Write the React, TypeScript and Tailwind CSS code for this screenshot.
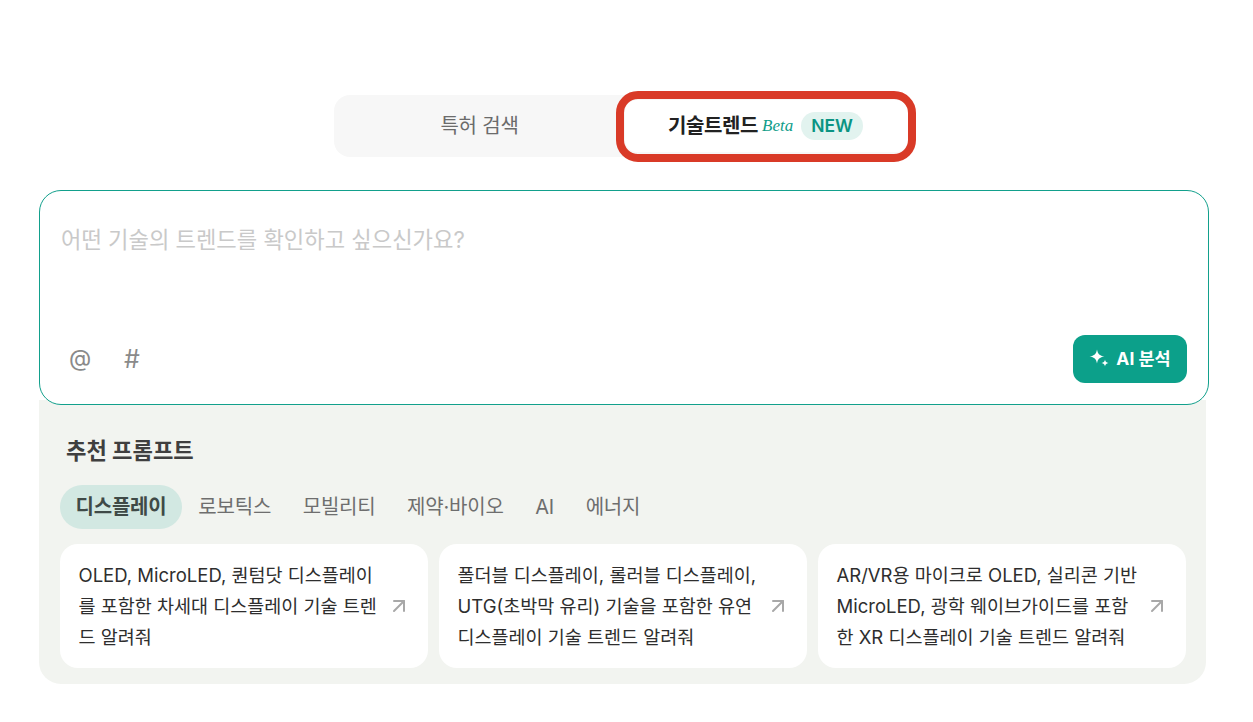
import { ArrowUpRight } from "lucide-react"

const categories = ["디스플레이", "로보틱스", "모빌리티", "제약·바이오", "AI", "에너지"]

const prompts = [
  ["OLED, MicroLED, 퀀텀닷 디스플레이", "를 포함한 차세대 디스플레이 기술 트렌", "드 알려줘"],
  ["폴더블 디스플레이, 롤러블 디스플레이,", "UTG(초박막 유리) 기술을 포함한 유연", "디스플레이 기술 트렌드 알려줘"],
  ["AR/VR용 마이크로 OLED, 실리콘 기반", "MicroLED, 광학 웨이브가이드를 포함", "한 XR 디스플레이 기술 트렌드 알려줘"],
]

function Sparkle() {
  return (
    <svg width="20" height="20" viewBox="0 0 20 20" fill="white">
      <path d="M8 0.5 C8.8 5 10.5 6.7 15.5 7.5 C10.5 8.3 8.8 10 8 14.5 C7.2 10 5.5 8.3 0.5 7.5 C5.5 6.7 7.2 5 8 0.5 Z" />
      <path d="M16 10.5 C16.3 12.6 17 13.3 19.5 14 C17 14.7 16.3 15.4 16 17.5 C15.7 15.4 15 14.7 12.5 14 C15 13.3 15.7 12.6 16 10.5 Z" />
    </svg>
  )
}

export default function App() {
  return (
    <div className="min-h-[722px] bg-white pt-[95px] font-['Inter','Noto_Sans_CJK_KR',sans-serif]">
      {/* Tabs */}
      <div className="ml-[334px] flex h-[62px] w-[578px] rounded-2xl bg-[#f7f7f7] py-[5px]">
        <button className="w-[291px] text-[20px] tracking-[-0.2px] text-[#6b6b6b]">특허 검색</button>
        <div className="relative flex w-[283px] items-center justify-center rounded-xl bg-white pr-[2px]">
          <span className="text-[20px] font-bold tracking-[-0.4px] text-[#222222]">기술트렌드</span>
          <span className="ml-[4px] font-['Liberation_Serif',serif] text-[17px] italic text-[#0f9d8a]">Beta</span>
          <span className="ml-[8px] flex h-[28px] items-center rounded-full bg-[#e2f3ef] px-[10px] text-[17.5px] font-semibold text-[#0b9483]">
            NEW
          </span>
          {/* annotation */}
          <div className="absolute top-[-9px] left-[-9px] h-[71px] w-[300px] rounded-[22px] border-[8px] border-[#d93a27]" />
        </div>
      </div>

      <div className="mt-[33px] ml-[39px] w-[1170px]">
        {/* Prompt box */}
        <div className="relative z-10 flex h-[215px] flex-col justify-between rounded-[22px] border border-[#12a08c] bg-white pt-[34px] pr-[21px] pb-[21px] pl-[21px]">
          <p className="text-[22.2px] leading-[30px] text-[#c9c9c9]">어떤 기술의 트렌드를 확인하고 싶으신가요?</p>
          <div className="flex items-center justify-between">
            <div className="flex items-center pl-[8px] text-[#8a8a8a]">
              <span className="mb-[2px] w-[55px] text-[23px]">@</span>
              <span className="mt-[2px] text-[25px]">#</span>
            </div>
            <button className="flex h-[48px] w-[114px] items-center justify-center gap-[7px] rounded-xl bg-[#0ca08a] text-[17.5px] font-bold text-white">
              <Sparkle />
              AI 분석
            </button>
          </div>
        </div>

        {/* Recommended prompts */}
        <div className="mt-[-5px] h-[284px] w-[1167px] rounded-b-[22px] bg-[#f2f4f0] pt-[35px] pl-[21px]">
          <h2 className="pl-[6px] text-[22.2px] leading-[32px] font-bold text-[#3f3f3f]">추천 프롬프트</h2>
          <div className="mt-[18px] flex h-[44px] items-center gap-[1px] tracking-[-0.2px]">
            {categories.map((c, i) => (
              <button
                key={c}
                className={
                  i === 0
                    ? "flex h-[44px] items-center rounded-full bg-[#d2e8e2] px-[15.5px] text-[20px] font-bold text-[#3f4a47]"
                    : "px-[15.3px] text-[20px] text-[#6e6e6e]"
                }
              >
                {c}
              </button>
            ))}
          </div>
          <div className="mt-[15px] flex gap-[11px]">
            {prompts.map((lines, i) => (
              <div key={i} className="flex h-[124px] w-[368px] items-center justify-between rounded-[18px] bg-white pr-[17px] pl-[18.5px]">
                <p className="text-[18.5px] leading-[31px] whitespace-nowrap text-[#2e2e2e]">
                  {lines.map((l) => (
                    <span key={l} className="block">{l}</span>
                  ))}
                </p>
                <ArrowUpRight className="h-[24px] w-[24px] shrink-0 text-[#a8a8a8]" strokeWidth={2} />
              </div>
            ))}
          </div>
        </div>
      </div>
    </div>
  )
}
